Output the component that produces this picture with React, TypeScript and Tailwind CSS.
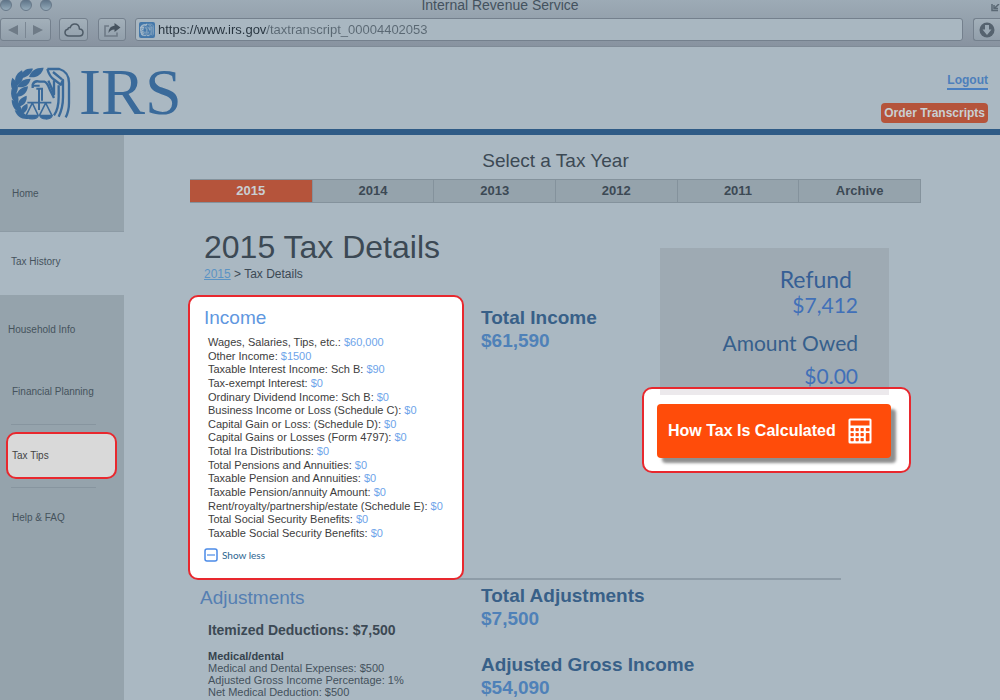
import React from "react";

const incomeRows: [string, string][] = [
  ["Wages, Salaries, Tips, etc.:", "$60,000"],
  ["Other Income:", "$1500"],
  ["Taxable Interest Income: Sch B:", "$90"],
  ["Tax-exempt Interest:", "$0"],
  ["Ordinary Dividend Income: Sch B:", "$0"],
  ["Business Income or Loss (Schedule C):", "$0"],
  ["Capital Gain or Loss: (Schedule D):", "$0"],
  ["Capital Gains or Losses (Form 4797):", "$0"],
  ["Total Ira Distributions:", "$0"],
  ["Total Pensions and Annuities:", "$0"],
  ["Taxable Pension and Annuities:", "$0"],
  ["Taxable Pension/annuity Amount:", "$0"],
  ["Rent/royalty/partnership/estate (Schedule E):", "$0"],
  ["Total Social Security Benefits:", "$0"],
  ["Taxable Social Security Benefits:", "$0"],
];

const years = ["2015", "2014", "2013", "2012", "2011", "Archive"];

function EagleMark({ className }: { className: string }) {
  return (
    <svg viewBox="34 199 180 162" className={className} aria-hidden="true">
      <g fill="currentColor">
        <path d="M132 201C110 200 95 208 88 229C110 233 127 222 132 201Z" />
        <path d="M100 204C80 202 66 211 60 233C80 231 94 221 100 204Z" />
        <path d="M67 209C47 220 41 237 51 256C69 245 75 229 67 209Z" />
        <path d="M93 234C72 234 59 242 53 259C73 263 88 254 93 234Z" />
        <path d="M38 231C30 252 34 267 49 279C60 261 54 244 38 231Z" />
        <path d="M85 257C66 259 53 269 49 288C70 289 83 277 85 257Z" />
        <path d="M36 264C31 287 38 302 54 310C61 291 53 274 36 264Z" />
        <path d="M81 285C64 290 53 301 54 319C73 315 83 303 81 285Z" />
        <path d="M36 297C36 318 47 332 66 337C68 318 55 303 36 297Z" />
        <path d="M83 309C68 315 61 325 64 341C79 335 87 325 83 309Z" />
        <path d="M45 329C52 348 65 357 86 355C80 339 65 330 45 329Z" />
      </g>
      <g fill="none" stroke="currentColor" strokeLinejoin="round">
        <path strokeWidth="7" d="M99 262V252C103 242 111 240 120 243L134 243C143 245 146 256 151 268L163 292" />
        <path strokeWidth="6" d="M100 255H120M118 262V328M110 264H130M127 266V300" />
        <path strokeWidth="7" d="M143 205H179C199 211 208 226 208 247V307C208 326 204 339 198 350" />
        <path strokeWidth="7" d="M143 205C147 220 153 231 165 238L183 252L190 238V290C190 312 184 334 177 348" />
        <path strokeWidth="7" d="M146 240C151 252 158 266 163 281V239M160 214L187 236M177 254V288C177 312 172 332 163 344" />
        <path strokeWidth="5" d="M83 306H155M98 307L80 343M98 307L115 343M138 307L120 343M138 307L156 343" />
        <path fill="currentColor" strokeWidth="4" d="M78 344H116C113 358 82 358 78 344ZM120 344H158C154 359 124 358 120 344Z" />
      </g>
    </svg>
  );
}

function BrowserChrome() {
  return (
    <div className="border-b border-[#7f8b97] bg-linear-to-b from-[#9dabb6] to-[#8893a0]">
      <div className="flex h-[18px] items-start justify-between">
        <div className="flex w-14 gap-2">
          {["Close", "Minimize", "Zoom"].map((name) => (
            <button
              key={name}
              aria-label={name}
              className="-mt-px size-3 rounded-full border border-[#68798a] bg-linear-to-b from-[#5d7387] to-[#95abba]"
            />
          ))}
        </div>
        <div className="text-[14px] leading-[10px] text-[#44525e]">Internal Revenue Service</div>
        <div className="flex w-14 justify-end pt-1 text-[#5a6874]">
          <svg viewBox="0 0 10 8" className="h-2 w-2.5" aria-hidden="true">
            <path d="M2 0V6.500H8M4 1V4.500H8M9 0L4.500 4.200" fill="none" stroke="currentColor" strokeWidth="1.500" />
          </svg>
        </div>
      </div>
      <div className="flex h-7 items-start">
        <div className="flex h-[23px] w-[51px] items-center rounded-[3px] border border-[#74808d] bg-linear-to-b from-[#a3b0ba] to-[#929fab] text-[#6f7b87]">
          <button aria-label="Back" className="flex h-full flex-1 items-center justify-center">
            <svg viewBox="0 0 10 10" className="size-2.5" aria-hidden="true"><path d="M10 0V10L0 5Z" fill="currentColor" /></svg>
          </button>
          <span className="h-4 w-px bg-[#7b8793]" />
          <button aria-label="Forward" className="flex h-full flex-1 items-center justify-center">
            <svg viewBox="0 0 10 10" className="size-2.5" aria-hidden="true"><path d="M0 0V10L10 5Z" fill="currentColor" /></svg>
          </button>
        </div>
        <button aria-label="iCloud tabs" className="ml-2 flex h-[23px] w-[29px] items-center justify-center rounded-[3px] border border-[#74808d] bg-linear-to-b from-[#a3b0ba] to-[#929fab] text-[#4e5b67]">
          <svg viewBox="0 0 20 14" className="h-3.5 w-5" aria-hidden="true">
            <path d="M5 13C2.500 13 1 11.500 1 9.600C1 7.900 2.200 6.600 3.800 6.300C3.900 5 5 4.300 6.200 4.600C7 2.300 8.700 1 10.700 1C13.400 1 15.300 3 15.400 5.900C17.600 6 19 7.500 19 9.500C19 11.500 17.500 13 15.300 13Z" fill="none" stroke="currentColor" strokeWidth="1.500" />
          </svg>
        </button>
        <button aria-label="Share" className="ml-2.5 flex h-[23px] w-[28px] items-center justify-center rounded-[3px] border border-[#74808d] bg-linear-to-b from-[#a3b0ba] to-[#929fab] text-[#46535f]">
          <svg viewBox="0 0 18 14" className="h-3.5 w-[18px]" aria-hidden="true">
            <path d="M6 3H2V13H14V9.500" fill="none" stroke="#6f7b87" strokeWidth="1.600" />
            <path d="M11.500 0L17.500 4.500L11.500 9V6.400C8.500 6.400 7 7.600 5.500 10C5.700 5.600 7.800 3 11.500 2.700Z" fill="currentColor" />
          </svg>
        </button>
        <div className="ml-[9px] flex h-[23px] flex-1 items-center rounded-[3px] border border-[#74808d] bg-[#a9b7c1] pl-[3px]">
          <span className="flex size-4 items-center justify-center rounded-[2px] bg-[#4478aa] text-[#a9bccb]">
            <EagleMark className="size-3.5" />
          </span>
          <input
            aria-label="Address"
            defaultValue="https://www.irs.gov/taxtranscript_00004402053"
            className="ml-[3px] h-5 min-w-0 flex-1 bg-linear-to-r from-[#26333e] from-[109px] to-[#5a6873] to-[109px] bg-clip-text text-[13px] text-transparent outline-none"
          />
        </div>
        <button aria-label="Downloads" className="ml-2.5 flex h-[23px] w-[27px] items-center justify-center rounded-l-[3px] border border-r-0 border-[#74808d] bg-linear-to-b from-[#a3b0ba] to-[#929fab]">
          <svg viewBox="0 0 16 16" className="size-4" aria-hidden="true">
            <circle cx="8" cy="8" r="7.500" fill="#56636f" />
            <path d="M6 3H10V7.500H12.500L8 13L3.500 7.500H6Z" fill="#9ba9b4" />
          </svg>
        </button>
      </div>
    </div>
  );
}

function Sidebar() {
  return (
    <nav className="flex w-[124px] shrink-0 flex-col bg-[#95a3ac] text-[10px] leading-[14px] text-[#46535d]">
      <a href="#home" className="flex h-[97px] items-center border-b border-[#8d9ba5] pt-[22px] pl-3">Home</a>
      <a href="#history" className="flex h-[63px] items-center bg-[#aab8c2] pb-1 pl-[11px]">Tax History</a>
      <a href="#household" className="mt-7 pl-2">Household Info</a>
      <a href="#planning" className="mt-12 pl-3">Financial Planning</a>
      <hr className="mt-[25px] mr-7 ml-[11px] border-[#87959f]" />
      <a href="#tips" className="mr-[7px] ml-1.5 mt-[7px] flex h-[47px] items-center rounded-[10px] border-2 border-[#e8282e] bg-[#d9d9d9] pl-1 text-[#444444]">Tax Tips</a>
      <hr className="mt-2 mr-7 ml-[11px] border-[#87959f]" />
      <a href="#help" className="mt-[23px] pl-3">Help &amp; FAQ</a>
    </nav>
  );
}

function CalculatorIcon() {
  return (
    <svg viewBox="0 0 24 26" className="h-[26px] w-6" aria-hidden="true">
      <rect x="0.500" y="0.500" width="23" height="25" rx="1.500" fill="#fff" />
      <g fill="#ff4c0a">
        <rect x="2.500" y="2.500" width="19" height="5" />
        {[10, 15, 20].map((y) =>
          [2.5, 7.5, 12.5].map((x) => <rect key={`${x}-${y}`} x={x} y={y} width="3.300" height="3.300" rx="0.800" />)
        )}
        <rect x="17.800" y="10" width="3.700" height="3.300" rx="0.800" />
        <rect x="17.800" y="15" width="3.700" height="8.300" rx="0.800" />
      </g>
    </svg>
  );
}

function Total({ label, value }: { label: string; value: string }) {
  return (
    <div className="text-[19px] leading-[23px] font-bold whitespace-nowrap">
      <h3 className="text-[#386088]">{label}</h3>
      <p className="text-[#4f81b8]">{value}</p>
    </div>
  );
}

export default function App() {
  return (
    <div className="flex h-screen flex-col overflow-hidden bg-[#aab8c2] font-['Liberation_Sans',Arial,sans-serif] text-[#3c4954]">
      <BrowserChrome />
      <header className="flex h-[88px] shrink-0 items-start justify-between border-b-[6px] border-[#2f5b86] pr-3 pl-[11px]">
        <div className="flex items-center pt-[9px] text-[#3a6a9a]">
          <EagleMark className="mt-1 h-[54px] w-[60px]" />
          <span className="ml-2 font-['Liberation_Serif',serif] text-[66px] leading-[72px]">IRS</span>
        </div>
        <div className="flex flex-col items-end gap-[13px] pt-[25px]">
          <a href="#logout" className="border-b-2 border-[#4a7fc0] text-[12px] leading-4 font-bold text-[#4d7fbb]">Logout</a>
          <button className="h-5 rounded-[4px] bg-[#b5543b] px-[3px] text-[12px] font-bold text-[#c9cfd3]">Order Transcripts</button>
        </div>
      </header>

      <div className="flex min-h-0 flex-1">
        <Sidebar />
        <main className="min-w-0 flex-1 pt-3">
          <h2 className="mr-[79px] ml-[66px] text-center text-[19px] leading-7">Select a Tax Year</h2>
          <div className="mt-1 mr-[79px] ml-[66px] grid h-6 grid-cols-6 border border-l-0 border-[#84929c] bg-[#95a3ac] text-[13px] font-bold">
            {years.map((year, i) => (
              <button
                key={year}
                className={i === 0 ? "bg-[#b5543b] text-[#c9cfd3]" : "border-l border-[#84929c]"}
              >
                {year}
              </button>
            ))}
          </div>

          <div className="mt-[26px] ml-16 grid grid-cols-[276px_178px_269px]">
            <section>
              <h1 className="pl-4 text-[32px] leading-9">2015 Tax Details</h1>
              <p className="mt-px pl-4 text-[12px] leading-4">
                <a href="#2015" className="text-[#5b93c4] underline">2015</a> &gt; Tax Details
              </p>
              <div className="relative mt-[13px] rounded-[10px] border-2 border-[#e8282e] bg-white px-3.5 pt-[9px] pb-[15px]">
                <h2 className="text-[19px] leading-6 text-[#5f97e0]">Income</h2>
                <ul className="mt-1.5 flex min-h-[204px] flex-col justify-between pl-1 text-[11px] leading-[13px] whitespace-nowrap text-[#3d3d3d]">
                  {incomeRows.map(([label, value]) => (
                    <li key={label}>
                      {label} <span className="text-[#6ea4ea]">{value}</span>
                    </li>
                  ))}
                </ul>
                <button className="mt-[7px] flex h-4 items-center gap-1 font-['Lato',sans-serif] text-[10px] text-[#2b6590]">
                  <svg viewBox="0 0 14 14" className="size-3.5" aria-hidden="true">
                    <rect x="1" y="1" width="12" height="12" rx="2" fill="none" stroke="#4b8be8" strokeWidth="1.500" />
                    <path d="M3 7H11" stroke="#4b8be8" strokeWidth="1.200" />
                  </svg>
                  Show less
                </button>
              </div>
            </section>

            <div className="pt-[77px] pl-[17px]">
              <Total label="Total Income" value="$61,590" />
            </div>

            <aside className="pt-[19px]">
              <div className="mr-[22px] ml-[18px] bg-[#9eaab3] pt-[19px] pr-[31px] pb-[7px] text-right font-['Lato',sans-serif] text-[21px] leading-[25px]">
                <h3 className="pr-1.5 text-[23px] text-[#365f95]">Refund</h3>
                <p className="text-[#4170b8]">$7,412</p>
                <h3 className="mt-[13px] text-[#365f8c]">Amount Owed</h3>
                <p className="mt-2 text-[#4170b8]">$0.00</p>
              </div>
              <div className="relative -mt-2 rounded-[10px] border-2 border-[#e8282e] bg-white pb-[13px]">
                <div className="mr-5 ml-4 h-1.5 bg-[#ece9ec]" />
                <button className="mt-[9px] mr-[18px] ml-[13px] flex h-[54px] w-[234px] items-center gap-3 rounded-[4px] bg-[#ff4c0a] pl-[11px] text-[16px] font-bold whitespace-nowrap text-white shadow-[5px_5px_3px_#8f8f8f]">
                  How Tax Is Calculated
                  <CalculatorIcon />
                </button>
              </div>
            </aside>
          </div>

          <hr className="-mt-0.5 mr-[159px] ml-[76px] border-t-2 border-[#8e9ca7]" />
          <div className="ml-[76px] grid grid-cols-[281px_1fr]">
            <section className="pt-1.5">
              <h2 className="text-[19px] leading-6 text-[#557fb2]">Adjustments</h2>
              <h3 className="mt-[11px] pl-2 text-[14px] leading-[18px] font-bold">Itemized Deductions: $7,500</h3>
              <div className="mt-[11px] pl-2 text-[11px] leading-3 text-[#44515c]">
                <h4 className="font-bold text-[#36434e]">Medical/dental</h4>
                <p>Medical and Dental Expenses: $500</p>
                <p>Adjusted Gross Income Percentage: 1%</p>
                <p>Net Medical Deduction: $500</p>
              </div>
            </section>
            <section className="flex flex-col gap-[23px] pt-1">
              <Total label="Total Adjustments" value="$7,500" />
              <Total label="Adjusted Gross Income" value="$54,090" />
            </section>
          </div>
        </main>
      </div>
    </div>
  );
}
